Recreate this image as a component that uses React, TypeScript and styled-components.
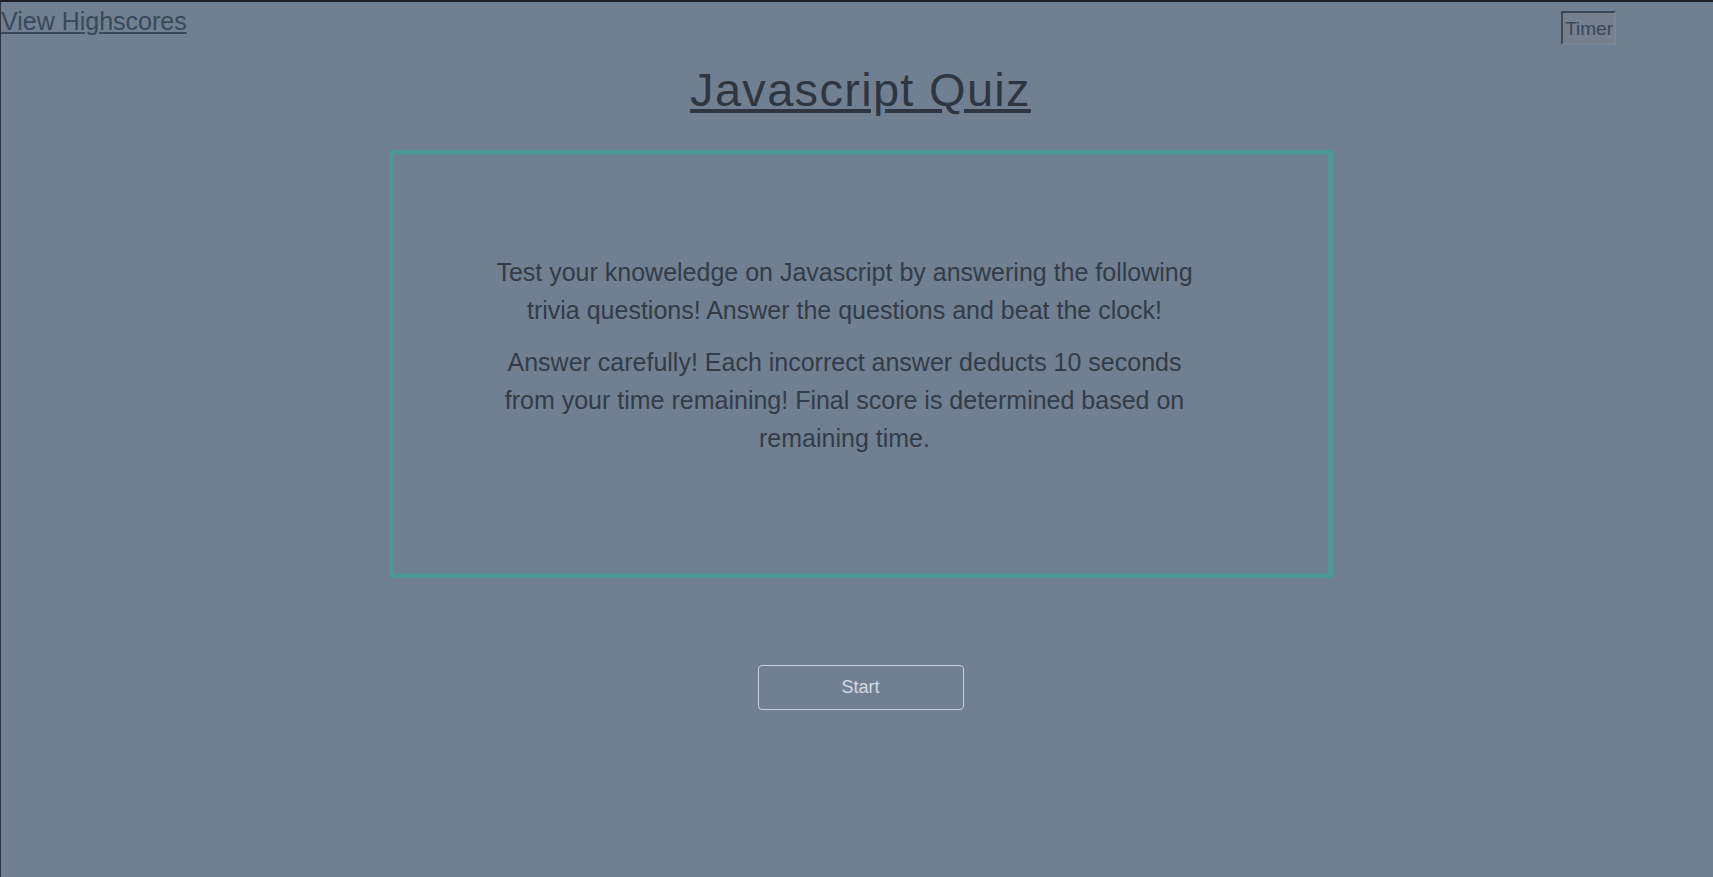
import React from 'react'
import styled, { createGlobalStyle } from 'styled-components'

const GlobalStyle = createGlobalStyle`
  html,
  body {
    margin: 0;
    padding: 0;
    background: #708090;
  }

  body {
    font-family: 'Liberation Sans', Arial, sans-serif;
  }
`

const Page = styled.div`
  min-height: 100vh;
  box-sizing: border-box;
  border-top: 2px solid #1b2027;
  border-left: 1px solid #2b3642;
`

const Header = styled.header`
  display: flex;
  justify-content: space-between;
  align-items: flex-start;
  height: 42px;
  padding-right: 97px;
`

const HighscoresLink = styled.a`
  margin-top: 5px;
  font-size: 25px;
  color: #37495a;
  text-decoration: underline;
  cursor: pointer;
`

const Timer = styled.div`
  margin-top: 9px;
  padding: 5px 1px 3px 2px;
  font-size: 19px;
  color: #3a4656;
  background: #74808d;
  border-style: solid;
  border-width: 2px;
  border-color: #3d4654 #7a8694 #7a8694 #3d4654;
`

const Main = styled.main`
  display: flex;
  flex-direction: column;
  align-items: center;
  padding-left: 7px;
`

const Title = styled.h1`
  margin: 18px 0 0;
  font-size: 47px;
  font-weight: 400;
  letter-spacing: 1.3px;
  color: #2e3741;
  text-decoration: underline;
  text-align: center;
`

// intro card with the rules
const Panel = styled.section`
  display: flex;
  justify-content: center;
  align-items: flex-start;
  box-sizing: border-box;
  width: 944px;
  height: 428px;
  margin-top: 33px;
  padding-top: 98px;
  border: 5px solid #4e9893;
`

const Intro = styled.div`
  width: 705px;
  margin-right: 32px;
`

const IntroText = styled.p`
  margin: 0;
  font-size: 25px;
  line-height: 38px;
  color: #323c48;
  text-align: center;

  & + & {
    margin-top: 14px;
  }
`

const StartButton = styled.button`
  width: 206px;
  height: 45px;
  margin-top: 87px;
  background: transparent;
  border: 1px solid #c5d0de;
  border-radius: 4px;
  font-family: 'Liberation Sans', Arial, sans-serif;
  font-size: 18px;
  color: #d3dbe6;
  cursor: pointer;
`

const App: React.FC = () => {
  return (
    <Page>
      <GlobalStyle />
      <Header>
        <HighscoresLink>View Highscores</HighscoresLink>
        <Timer>Timer</Timer>
      </Header>
      <Main>
        <Title>Javascript Quiz</Title>
        <Panel>
          <Intro>
            <IntroText>
              Test your knoweledge on Javascript by answering the following trivia questions!
              Answer the questions and beat the clock!
            </IntroText>
            <IntroText>
              Answer carefully! Each incorrect answer deducts 10 seconds from your time
              remaining! Final score is determined based on remaining time.
            </IntroText>
          </Intro>
        </Panel>
        <StartButton>Start</StartButton>
      </Main>
    </Page>
  )
}

export default App
